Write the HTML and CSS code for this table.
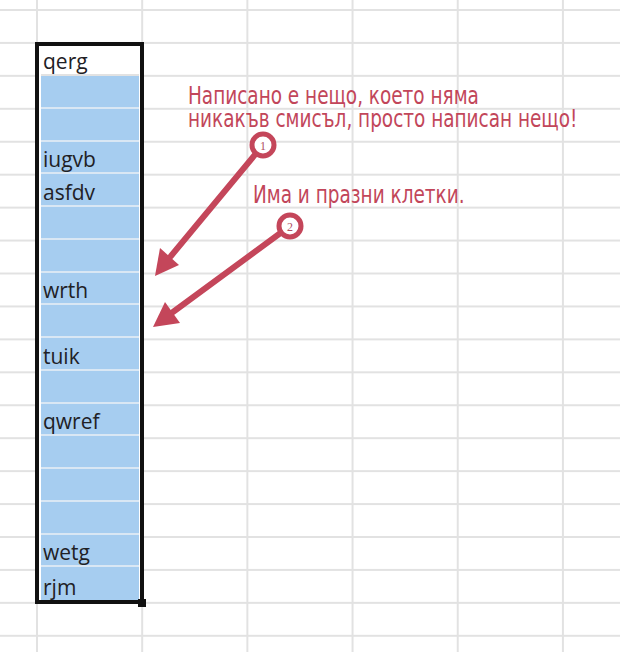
FILE: index.html
```html
<!DOCTYPE html>
<html lang="bg">
<head>
<meta charset="utf-8">
<title>Sheet</title>
<link rel="stylesheet" href="styles.css">
</head>
<body>
<div class="sheet">
  <div class="selection">
    <div class="cell first">qerg</div>
    <div class="cell"></div>
    <div class="cell"></div>
    <div class="cell">iugvb</div>
    <div class="cell">asfdv</div>
    <div class="cell"></div>
    <div class="cell"></div>
    <div class="cell">wrth</div>
    <div class="cell"></div>
    <div class="cell">tuik</div>
    <div class="cell"></div>
    <div class="cell">qwref</div>
    <div class="cell"></div>
    <div class="cell"></div>
    <div class="cell"></div>
    <div class="cell">wetg</div>
    <div class="cell last">rjm</div>
    <span class="handle"></span>
  </div>

  <p class="note note-one">Написано е нещо, което няма<br>никакъв смисъл, просто написан нещо!</p>
  <p class="note note-two">Има и празни клетки.</p>

  <svg class="marks" width="620" height="652" viewBox="0 0 620 652" xmlns="http://www.w3.org/2000/svg">
    <g stroke="#c4465a" stroke-width="6" stroke-linecap="round" fill="none">
      <line x1="263" y1="145" x2="171" y2="256"/>
      <line x1="290" y1="226" x2="173" y2="312"/>
    </g>
    <g fill="#c4465a">
      <polygon points="155,276 179,265 160,248"/>
      <polygon points="153,327 180,323 165,302"/>
    </g>
    <g fill="#ffffff" stroke="#c4465a" stroke-width="5">
      <circle cx="263" cy="145" r="11"/>
      <circle cx="290" cy="226" r="11"/>
    </g>
    <g class="num" fill="#b0505f" text-anchor="middle">
      <text x="263" y="149.5">1</text>
      <text x="290" y="230.5">2</text>
    </g>
  </svg>
</div>
</body>
</html>
```

FILE: styles.css
```css
html, body {
  margin: 0;
  padding: 0;
  background: #ffffff;
}

.sheet {
  position: relative;
  width: 620px;
  height: 652px;
  overflow: hidden;
  box-sizing: border-box;
  padding: 42px 0 0 35px;
  background-color: #ffffff;
  background-image:
    linear-gradient(to bottom, #e2e2e2 0, #e2e2e2 2px, transparent 2px),
    linear-gradient(to right, #e2e2e2 0, #e2e2e2 2px, transparent 2px);
  background-size: 100% 32.94px, 105.2px 100%;
  background-position: 0 9px, 36px 0;
}

.selection {
  position: relative;
  box-sizing: border-box;
  width: 109px;
  height: 562px;
  border: 4px solid #111111;
  background: #ffffff;
  padding: 0 1px 0 2px;
  display: grid;
  grid-template-rows: 30px repeat(16, 1fr);
}

.cell {
  display: flex;
  align-items: flex-end;
  box-sizing: border-box;
  padding: 0 0 2px 2px;
  background: #a6cdf0;
  border-bottom: 2px solid #d9e7f4;
  font-family: "Open Sans", "DejaVu Sans", sans-serif;
  font-size: 21px;
  line-height: 22px;
  color: #1f2125;
}

.cell.first {
  background: #ffffff;
  border-bottom-color: #e2e2e2;
}

.cell.last {
  border-bottom: 0;
}

.handle {
  position: absolute;
  right: -6px;
  bottom: -7px;
  width: 8px;
  height: 8px;
  background: #111111;
}

.note {
  position: absolute;
  margin: 0;
  font-family: "DejaVu Sans Condensed", "Liberation Sans", sans-serif;
  font-size: 25px;
  line-height: 23px;
  color: #c2465a;
  white-space: nowrap;
  transform: scaleX(0.82);
  transform-origin: left top;
}

.note-one {
  left: 188px;
  top: 84px;
}

.note-two {
  left: 253px;
  top: 183px;
}

.marks {
  position: absolute;
  left: 0;
  top: 0;
}

.num {
  font-family: "Liberation Serif", serif;
  font-size: 12px;
}
```
